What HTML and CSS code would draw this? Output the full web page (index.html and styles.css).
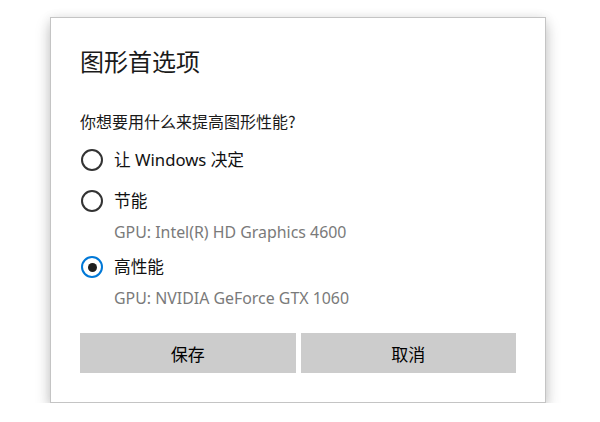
FILE: index.html
```html
<!DOCTYPE html>
<html lang="zh-CN">
<head>
<meta charset="utf-8">
<link rel="stylesheet" href="styles.css">
<title>图形首选项</title>
</head>
<body>
<div class="dialog">
  <h1 class="title">图形首选项</h1>
  <p class="question">你想要用什么来提高图形性能?</p>
  <div class="options">
    <div class="option">
      <div class="row"><span class="radio"></span><span class="label">让 Windows 决定</span></div>
    </div>
    <div class="option">
      <div class="row"><span class="radio"></span><span class="label">节能</span></div>
      <div class="gpu">GPU: Intel(R) HD Graphics 4600</div>
    </div>
    <div class="option">
      <div class="row"><span class="radio checked"></span><span class="label">高性能</span></div>
      <div class="gpu">GPU: NVIDIA GeForce GTX 1060</div>
    </div>
  </div>
  <div class="buttons">
    <button class="btn">保存</button>
    <button class="btn">取消</button>
  </div>
</div>
</body>
</html>
```
FILE: styles.css
```css
html, body {
  margin: 0;
  padding: 0;
  background: #ffffff;
}
body {
  font-family: "Noto Sans", "Noto Sans CJK SC", sans-serif;
  color: #000;
}
.dialog {
  box-sizing: border-box;
  width: 496px;
  height: 386px;
  margin: 17px 0 0 50px;
  background: #fff;
  border: 1px solid #c4c4c4;
  box-shadow: 0 7px 14px rgba(0,0,0,0.22), 0 0 10px rgba(0,0,0,0.08);
  padding: 27px 29px 0 29px;
}
.title {
  margin: 0;
  font-family: "Noto Sans CJK SC", sans-serif;
  font-weight: 400;
  font-size: 24px;
  line-height: 32px;
  color: #1a1a1a;
}
.question {
  margin: 34px 0 0 0;
  font-size: 16px;
  line-height: 20px;
  font-family: "Noto Sans CJK SC", sans-serif;
  color: #1a1a1a;
}
.options {
  margin-top: 17px;
  display: flex;
  flex-direction: column;
}
.option + .option {
  margin-top: 17px;
}
.option:nth-child(3) {
  margin-top: 13px;
}
.row {
  display: flex;
  align-items: center;
  height: 24px;
  gap: 11px;
}
.radio {
  box-sizing: border-box;
  width: 22px;
  height: 22px;
  margin-left: 1px;
  border: 2px solid #333;
  border-radius: 50%;
  display: flex;
  align-items: center;
  justify-content: center;
  flex: none;
}
.radio.checked {
  border-color: #0078d7;
}
.radio.checked::after {
  content: "";
  width: 9px;
  height: 9px;
  border-radius: 50%;
  background: #1f1f1f;
}
.label {
  font-size: 16.7px;
  line-height: 20px;
  color: #111;
}
.gpu {
  margin: 9px 0 0 34px;
  font-size: 15.9px;
  line-height: 20px;
  color: #7a7a7a;
}
.buttons {
  margin-top: 25px;
  display: flex;
  gap: 5px;
}
.btn {
  flex: 1;
  height: 40px;
  border: none;
  background: #cccccc;
  font-family: "Noto Sans CJK SC", sans-serif;
  font-size: 17px;
  color: #000;
  padding: 0;
}
```
